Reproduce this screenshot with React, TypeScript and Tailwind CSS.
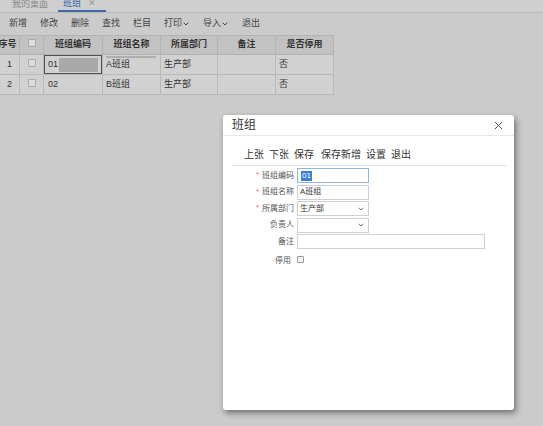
import { ChevronDown, X } from "lucide-react";

const font = "font-['Liberation_Sans','Noto_Sans_CJK_SC',sans-serif]";

const toolbar = ["新增", "修改", "删除", "查找", "栏目"];

const columns = [
  { label: "序号", w: "w-[24px]" },
  { label: "", w: "w-[24px]" },
  { label: "班组编码", w: "w-[59px]" },
  { label: "班组名称", w: "w-[58px]" },
  { label: "所属部门", w: "w-[57px]" },
  { label: "备注", w: "w-[58px]" },
  { label: "是否停用", w: "w-[58px]" },
];

const rows = [
  { no: "1", code: "01", name: "A班组", dept: "生产部", stop: "否" },
  { no: "2", code: "02", name: "B班组", dept: "生产部", stop: "否" },
];

function Box({ className = "" }: { className?: string }) {
  return <span className={`inline-block w-[8px] h-[8px] border border-[#a9a9a9] rounded-[1px] bg-[#dcdcdc] ${className}`} />;
}

function FormRow({ label, required, children }: { label: string; required?: boolean; children: React.ReactNode }) {
  return (
    <div className="flex items-center h-[15px]">
      <div className="w-[65px] pr-[3px] flex justify-end items-center text-[8px] text-[#555]">
        {required && <span className="text-[#e05a5a] mr-[3px] text-[7px]">*</span>}
        {label}
      </div>
      {children}
    </div>
  );
}

export default function App() {
  return (
    <div className={`${font} relative w-[543px] h-[426px] overflow-hidden bg-[#cbcbcb]`}>
      {/* tabs */}
      <div className="h-[13px] flex items-end border-b border-[#b9b9b9] bg-[#cfcfcf] text-[9px] leading-none">
        <div className="pl-[12px] pr-[10px] pb-[3px] text-[#8a8a8a]">我的桌面</div>
        <div className="flex items-end gap-[7px] px-[5px] w-[48px] pb-[2px] border-b-2 border-[#3d6aa8]">
          <span className="text-[#2f65a8]">班组</span>
          <span className="text-[#9a9a9a] text-[9px]">✕</span>
        </div>
      </div>

      {/* toolbar */}
      <div className="h-[21px] flex items-center gap-[13px] pl-[9px] text-[9px] text-[#444]">
        {toolbar.map((t) => (
          <span key={t}>{t}</span>
        ))}
        <span className="flex items-center">打印<ChevronDown size={8} strokeWidth={3} /></span>
        <span className="flex items-center">导入<ChevronDown size={8} strokeWidth={3} /></span>
        <span>退出</span>
      </div>

      {/* grid */}
      <table className="ml-[-5px] mt-[1px] border-collapse text-[9px] text-[#333] table-fixed">
        <thead>
          <tr className="h-[19px] bg-[#c2c2c2]">
            {columns.map((c, i) => (
              <th key={i} className={`${c.w} border border-[#b3b3b3] font-bold text-center p-0`}>
                {i === 1 ? <Box /> : c.label}
              </th>
            ))}
          </tr>
        </thead>
        <tbody>
          {rows.map((r, ri) => (
            <tr key={r.no} className="h-[20px] bg-[#d1d1d1]">
              <td className="border border-[#b9b9b9] text-center pl-[4px]">{r.no}</td>
              <td className="border border-[#b9b9b9] text-center"><Box /></td>
              <td className="border border-[#b9b9b9] p-0">
                {ri === 0 ? (
                  <div className="h-[19px] flex items-center border border-[#505050] pl-[3px] pr-[3px] gap-[1px]">
                    <span>01</span>
                    <span className="flex-1 h-[14px] bg-[#a9a9a9]" />
                  </div>
                ) : (
                  <span className="pl-[4px]">{r.code}</span>
                )}
              </td>
              <td className="border border-[#b9b9b9] p-0 relative">
                {ri === 0 && <span className="absolute left-[3px] top-[1px] w-[50px] h-[2px] bg-[#aeaeae]" />}
                <span className="pl-[3px]">{r.name}</span>
              </td>
              <td className="border border-[#b9b9b9] pl-[3px]">{r.dept}</td>
              <td className="border border-[#b9b9b9]" />
              <td className="border border-[#b9b9b9] pl-[3px]">{r.stop}</td>
            </tr>
          ))}
        </tbody>
      </table>

      {/* dialog */}
      <div className="absolute left-[223px] top-[115px] w-[291px] h-[295px] bg-white rounded-[3px] shadow-[2px_3px_6px_rgba(0,0,0,0.45)] flex flex-col">
        <div className="h-[21px] flex items-center justify-between pl-[9px] pr-[9px] border-b border-[#e8e8e8]">
          <span className="text-[12px] text-[#333]">班组</span>
          <X size={13} strokeWidth={1.7} className="text-[#444]" />
        </div>
        <div className="pl-[9px] pr-[7px] flex flex-col">
          <div className="h-[30px] flex items-end pb-[3px] gap-[5px] pl-[12px] border-b border-[#e3e3e3] text-[10px] text-[#333]">
            <span>上张</span>
            <span>下张</span>
            <span>保存</span>
            <span className="ml-[2px]">保存新增</span>
            <span>设置</span>
            <span>退出</span>
          </div>
          <div className="flex flex-col gap-[1.5px] pt-[2px]">
            <FormRow label="班组编码" required>
              <div className="w-[72px] h-[15px] border border-[#8fb1e3] flex items-center pl-[3px] text-[8px]">
                <span className="bg-[#3a7fd9] text-white px-[1px] leading-[10px]">01</span>
              </div>
            </FormRow>
            <FormRow label="班组名称" required>
              <div className="w-[72px] h-[15px] border border-[#d0d0d0] flex items-center pl-[2px] text-[8px] text-[#333]">A班组</div>
            </FormRow>
            <FormRow label="所属部门" required>
              <div className="w-[72px] h-[15px] border border-[#d0d0d0] flex items-center justify-between pl-[2px] pr-[3px] text-[8px] text-[#333]">
                生产部
                <ChevronDown size={8} strokeWidth={2.5} className="text-[#555]" />
              </div>
            </FormRow>
            <FormRow label="负责人">
              <div className="w-[72px] h-[15px] border border-[#d0d0d0] flex items-center justify-end pr-[3px]">
                <ChevronDown size={8} strokeWidth={2.5} className="text-[#555]" />
              </div>
            </FormRow>
            <FormRow label="备注">
              <div className="w-[188px] h-[15px] border border-[#d0d0d0]" />
            </FormRow>
            <div className="flex items-center h-[18px] mt-[1px]">
              <div className="w-[65px] pr-[6px] flex justify-end text-[8px] text-[#555]">停用</div>
              <span className="inline-block w-[7px] h-[7px] border border-[#9a9a9a] rounded-[1px] bg-[#f4f4f4] mb-[3px]" />
            </div>
          </div>
        </div>
      </div>
    </div>
  );
}
